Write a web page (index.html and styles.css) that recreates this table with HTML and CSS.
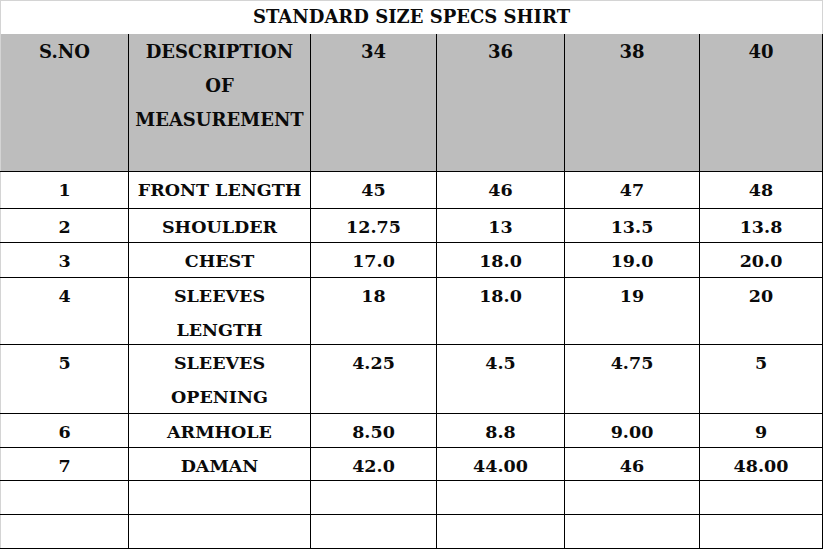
FILE: index.html
```html
<!DOCTYPE html>
<html>
<head>
<meta charset="utf-8">
<link rel="stylesheet" href="styles.css">
</head>
<body>
<table class="specs">
  <colgroup>
    <col class="c-sno">
    <col class="c-desc">
    <col class="c-34">
    <col class="c-36">
    <col class="c-38">
    <col class="c-40">
  </colgroup>
  <tr class="r-title"><td colspan="6" class="title">STANDARD SIZE SPECS SHIRT</td></tr>
  <tr class="r-head">
    <th><div class="t">S.NO</div></th>
    <th><div class="t">DESCRIPTION<br>OF<br>MEASUREMENT</div></th>
    <th><div class="t">34</div></th><th><div class="t">36</div></th><th><div class="t">38</div></th><th><div class="t">40</div></th>
  </tr>
  <tr class="r-38"><td><div class="t">1</div></td><td><div class="t">FRONT LENGTH</div></td><td><div class="t">45</div></td><td><div class="t">46</div></td><td><div class="t">47</div></td><td><div class="t">48</div></td></tr>
  <tr class="r-34"><td><div class="t">2</div></td><td><div class="t">SHOULDER</div></td><td><div class="t">12.75</div></td><td><div class="t">13</div></td><td><div class="t">13.5</div></td><td><div class="t">13.8</div></td></tr>
  <tr class="r-35"><td><div class="t">3</div></td><td><div class="t">CHEST</div></td><td><div class="t">17.0</div></td><td><div class="t">18.0</div></td><td><div class="t">19.0</div></td><td><div class="t">20.0</div></td></tr>
  <tr class="r-67"><td><div class="t">4</div></td><td><div class="t">SLEEVES<br>LENGTH</div></td><td><div class="t">18</div></td><td><div class="t">18.0</div></td><td><div class="t">19</div></td><td><div class="t">20</div></td></tr>
  <tr class="r-69"><td><div class="t">5</div></td><td><div class="t">SLEEVES<br>OPENING</div></td><td><div class="t">4.25</div></td><td><div class="t">4.5</div></td><td><div class="t">4.75</div></td><td><div class="t">5</div></td></tr>
  <tr class="r-34"><td><div class="t">6</div></td><td><div class="t">ARMHOLE</div></td><td><div class="t">8.50</div></td><td><div class="t">8.8</div></td><td><div class="t">9.00</div></td><td><div class="t">9</div></td></tr>
  <tr class="r-33"><td><div class="t">7</div></td><td><div class="t">DAMAN</div></td><td><div class="t">42.0</div></td><td><div class="t">44.00</div></td><td><div class="t">46</div></td><td><div class="t">48.00</div></td></tr>
  <tr class="r-34"><td></td><td></td><td></td><td></td><td></td><td></td></tr>
  <tr class="r-34"><td></td><td></td><td></td><td></td><td></td><td></td></tr>
</table>
</body>
</html>
```
FILE: styles.css
```css
html, body {
  margin: 0;
  padding: 0;
  background: #ffffff;
}
.specs {
  border-collapse: collapse;
  table-layout: fixed;
  width: 823px;
  font-family: "DejaVu Serif", "Liberation Serif", serif;
  font-weight: bold;
  font-size: 17.5px;
  color: #0a0a0a;
  border-top: 1px solid #d4d4d4;
  border-left: 1px solid #d4d4d4;
}
.c-sno { width: 128px; }
.c-desc { width: 182px; }
.c-34 { width: 126px; }
.c-36 { width: 128px; }
.c-38 { width: 135px; }
.c-40 { width: 123px; }
.specs td, .specs th {
  border: 1px solid #000000;
  padding: 0;
  text-align: center;
  vertical-align: top;
  font-weight: bold;
  white-space: nowrap;
  overflow: hidden;
}
.t {
  line-height: 34px;
  padding-top: 1px;
  margin-bottom: -20px;
}
.specs td:first-child, .specs th:first-child {
  border-left: 1px solid #d4d4d4;
}
.specs .title {
  border: none;
  border-right: 1px solid #d4d4d4;
  font-size: 18px;
  line-height: 32px;
  padding: 0;
}
.r-title { height: 33px; }
.r-head th {
  background: #bdbdbd;
  font-size: 18px;
  border-top: none;
}
.r-head { height: 138px; }
.r-38 { height: 37px; }
.r-34 { height: 34px; }
.r-35 { height: 35px; }
.r-33 { height: 33px; }
.r-67 { height: 67px; }
.r-69 { height: 69px; }
```
